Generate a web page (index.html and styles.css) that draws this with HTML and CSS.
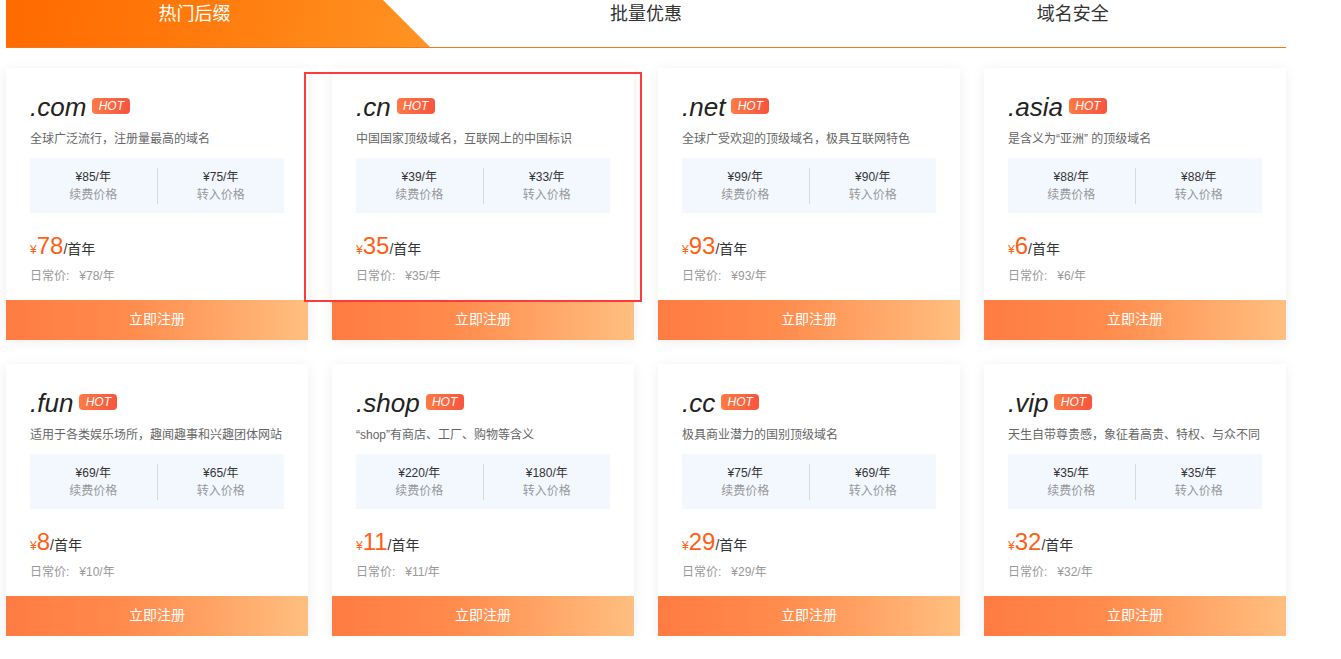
FILE: index.html
```html
<!DOCTYPE html>
<html lang="zh-CN">
<head>
    <meta charset="UTF-8">
    <meta name="viewport" content="width=device-width, initial-scale=1.0">
    <title>域名注册</title>
    <link rel="stylesheet" href="styles.css">
</head>
<body>
    <div class="page">
        <nav class="tabs">
            <div class="tab tab-active"><span>热门后缀</span></div>
            <div class="tab">批量优惠</div>
            <div class="tab">域名安全</div>
        </nav>

        <div class="card-grid">
            <div class="card">
                <div class="card-body">
                    <div class="domain-title"><span class="domain-name">.com</span><span class="hot-tag">HOT</span></div>
                    <p class="domain-desc">全球广泛流行，注册量最高的域名</p>
                    <div class="price-box">
                        <div class="price-col"><div class="price-val">¥85/年</div><div class="price-label">续费价格</div></div>
                        <div class="price-col"><div class="price-val">¥75/年</div><div class="price-label">转入价格</div></div>
                    </div>
                    <div class="first-price"><span class="yen">¥</span><span class="amount">78</span><span class="unit">/首年</span></div>
                    <div class="normal-price">日常价:<span class="normal-val">¥78/年</span></div>
                </div>
                <button class="btn-register">立即注册</button>
            </div>

            <div class="card">
                <div class="highlight-box"></div>
                <div class="card-body">
                    <div class="domain-title"><span class="domain-name">.cn</span><span class="hot-tag">HOT</span></div>
                    <p class="domain-desc">中国国家顶级域名，互联网上的中国标识</p>
                    <div class="price-box">
                        <div class="price-col"><div class="price-val">¥39/年</div><div class="price-label">续费价格</div></div>
                        <div class="price-col"><div class="price-val">¥33/年</div><div class="price-label">转入价格</div></div>
                    </div>
                    <div class="first-price"><span class="yen">¥</span><span class="amount">35</span><span class="unit">/首年</span></div>
                    <div class="normal-price">日常价:<span class="normal-val">¥35/年</span></div>
                </div>
                <button class="btn-register">立即注册</button>
            </div>

            <div class="card">
                <div class="card-body">
                    <div class="domain-title"><span class="domain-name">.net</span><span class="hot-tag">HOT</span></div>
                    <p class="domain-desc">全球广受欢迎的顶级域名，极具互联网特色</p>
                    <div class="price-box">
                        <div class="price-col"><div class="price-val">¥99/年</div><div class="price-label">续费价格</div></div>
                        <div class="price-col"><div class="price-val">¥90/年</div><div class="price-label">转入价格</div></div>
                    </div>
                    <div class="first-price"><span class="yen">¥</span><span class="amount">93</span><span class="unit">/首年</span></div>
                    <div class="normal-price">日常价:<span class="normal-val">¥93/年</span></div>
                </div>
                <button class="btn-register">立即注册</button>
            </div>

            <div class="card">
                <div class="card-body">
                    <div class="domain-title"><span class="domain-name">.asia</span><span class="hot-tag">HOT</span></div>
                    <p class="domain-desc">是含义为“亚洲” 的顶级域名</p>
                    <div class="price-box">
                        <div class="price-col"><div class="price-val">¥88/年</div><div class="price-label">续费价格</div></div>
                        <div class="price-col"><div class="price-val">¥88/年</div><div class="price-label">转入价格</div></div>
                    </div>
                    <div class="first-price"><span class="yen">¥</span><span class="amount">6</span><span class="unit">/首年</span></div>
                    <div class="normal-price">日常价:<span class="normal-val">¥6/年</span></div>
                </div>
                <button class="btn-register">立即注册</button>
            </div>

            <div class="card">
                <div class="card-body">
                    <div class="domain-title"><span class="domain-name">.fun</span><span class="hot-tag">HOT</span></div>
                    <p class="domain-desc">适用于各类娱乐场所，趣闻趣事和兴趣团体网站</p>
                    <div class="price-box">
                        <div class="price-col"><div class="price-val">¥69/年</div><div class="price-label">续费价格</div></div>
                        <div class="price-col"><div class="price-val">¥65/年</div><div class="price-label">转入价格</div></div>
                    </div>
                    <div class="first-price"><span class="yen">¥</span><span class="amount">8</span><span class="unit">/首年</span></div>
                    <div class="normal-price">日常价:<span class="normal-val">¥10/年</span></div>
                </div>
                <button class="btn-register">立即注册</button>
            </div>

            <div class="card">
                <div class="card-body">
                    <div class="domain-title"><span class="domain-name">.shop</span><span class="hot-tag">HOT</span></div>
                    <p class="domain-desc">“shop”有商店、工厂、购物等含义</p>
                    <div class="price-box">
                        <div class="price-col"><div class="price-val">¥220/年</div><div class="price-label">续费价格</div></div>
                        <div class="price-col"><div class="price-val">¥180/年</div><div class="price-label">转入价格</div></div>
                    </div>
                    <div class="first-price"><span class="yen">¥</span><span class="amount">11</span><span class="unit">/首年</span></div>
                    <div class="normal-price">日常价:<span class="normal-val">¥11/年</span></div>
                </div>
                <button class="btn-register">立即注册</button>
            </div>

            <div class="card">
                <div class="card-body">
                    <div class="domain-title"><span class="domain-name">.cc</span><span class="hot-tag">HOT</span></div>
                    <p class="domain-desc">极具商业潜力的国别顶级域名</p>
                    <div class="price-box">
                        <div class="price-col"><div class="price-val">¥75/年</div><div class="price-label">续费价格</div></div>
                        <div class="price-col"><div class="price-val">¥69/年</div><div class="price-label">转入价格</div></div>
                    </div>
                    <div class="first-price"><span class="yen">¥</span><span class="amount">29</span><span class="unit">/首年</span></div>
                    <div class="normal-price">日常价:<span class="normal-val">¥29/年</span></div>
                </div>
                <button class="btn-register">立即注册</button>
            </div>

            <div class="card">
                <div class="card-body">
                    <div class="domain-title"><span class="domain-name">.vip</span><span class="hot-tag">HOT</span></div>
                    <p class="domain-desc">天生自带尊贵感，象征着高贵、特权、与众不同</p>
                    <div class="price-box">
                        <div class="price-col"><div class="price-val">¥35/年</div><div class="price-label">续费价格</div></div>
                        <div class="price-col"><div class="price-val">¥35/年</div><div class="price-label">转入价格</div></div>
                    </div>
                    <div class="first-price"><span class="yen">¥</span><span class="amount">32</span><span class="unit">/首年</span></div>
                    <div class="normal-price">日常价:<span class="normal-val">¥32/年</span></div>
                </div>
                <button class="btn-register">立即注册</button>
            </div>
        </div>
    </div>
</body>
</html>
```

FILE: styles.css
```css
:root {
    --orange: #ff6a00;
    --orange-light: #ff9220;
    --price-color: #ff5f14;
    --text-color: #333333;
    --desc-color: #666666;
    --muted-color: #999999;
    --box-bg: #f3f8ff;
    --divider: #d9d9d9;
}

/* --- 全局 --- */
* {
    margin: 0;
    padding: 0;
    box-sizing: border-box;
}

body {
    font-family: "Liberation Sans", "Noto Sans CJK SC", sans-serif;
    background: #ffffff;
    color: var(--text-color);
    font-size: 12px;
}

.page {
    width: 1280px;
    margin-left: 6px;
}

/* --- 顶部标签 --- */
.tabs {
    display: grid;
    grid-template-columns: repeat(3, 1fr);
    height: 48px;
    border-bottom: 1px solid #f07a1a;
}

.tab {
    text-align: center;
    font-size: 18px;
    line-height: 28px;
    color: var(--text-color);
}

.tab-active {
    color: #ffffff;
    background: linear-gradient(100deg, #ff6a00 0%, #ff7a0c 45%, #ff9424 100%);
    clip-path: polygon(0 0, 377px 0, 424px 100%, 0 100%);
}

.tab-active span {
    display: block;
    width: 377px;
}

/* --- 卡片网格 --- */
.card-grid {
    display: grid;
    grid-template-columns: repeat(4, 302px);
    gap: 24px;
    margin-top: 20px;
}

.card {
    position: relative;
    height: 272px;
    background: #ffffff;
    box-shadow: 0 2px 12px rgba(0, 0, 0, 0.07);
    display: flex;
    flex-direction: column;
}

.card-body {
    padding: 23px 24px 0;
    flex: 1;
}

.domain-title {
    display: flex;
    align-items: center;
    height: 32px;
}

.domain-name {
    font-size: 26px;
    font-style: italic;
    color: #222222;
    line-height: 32px;
}

.hot-tag {
    margin-left: 6px;
    margin-bottom: 3px;
    width: 38px;
    height: 16px;
    line-height: 16px;
    border-radius: 4px;
    background: linear-gradient(90deg, #ff7a45, #f8543e);
    color: #ffffff;
    font-size: 12px;
    font-style: italic;
    text-align: center;
}

.domain-desc {
    margin-top: 6px;
    line-height: 20px;
    color: var(--desc-color);
    white-space: nowrap;
}

/* --- 价格框 --- */
.price-box {
    display: flex;
    margin-top: 9px;
    padding: 10px 0 9px;
    background: var(--box-bg);
}

.price-col {
    flex: 1;
    text-align: center;
    line-height: 18px;
}

.price-col + .price-col {
    border-left: 1px solid var(--divider);
}

.price-val {
    color: var(--text-color);
}

.price-label {
    color: var(--muted-color);
}

/* --- 首年价格 --- */
.first-price {
    margin-top: 18px;
    line-height: 30px;
    height: 30px;
}

.yen {
    font-size: 12px;
    color: var(--price-color);
}

.amount {
    font-size: 24px;
    color: var(--price-color);
}

.unit {
    font-size: 14px;
    color: var(--text-color);
}

.normal-price {
    margin-top: 5px;
    line-height: 20px;
    color: var(--muted-color);
}

.normal-val {
    margin-left: 10px;
}

/* --- 按钮 --- */
.btn-register {
    height: 40px;
    border: none;
    width: 100%;
    padding-bottom: 4px;
    font-family: inherit;
    font-size: 14px;
    color: #ffffff;
    background: linear-gradient(90deg, #ff7b42 0%, #ff8b4c 40%, #ffbf80 100%);
    cursor: pointer;
}

/* --- 选中标记 --- */
.highlight-box {
    position: absolute;
    left: -28px;
    top: 4px;
    width: 338px;
    height: 230px;
    border: 2px solid #ff3a3a;
    pointer-events: none;
    z-index: 2;
}
```
